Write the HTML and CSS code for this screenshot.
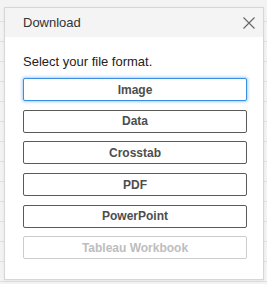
FILE: index.html
```html
<!DOCTYPE html>
<html lang="en">
<head>
    <meta charset="UTF-8">
    <meta name="viewport" content="width=device-width, initial-scale=1.0">
    <title>Download</title>
    <link rel="stylesheet" href="styles.css">
</head>
<body>
    <div class="dialog">
        <div class="dialog-header">
            <span class="dialog-title">Download</span>
            <button class="close-btn" aria-label="Close">
                <svg width="12" height="12" viewBox="0 0 12 12">
                    <path d="M0.5 0.5 L11.5 11.5 M11.5 0.5 L0.5 11.5" stroke="#666" stroke-width="1.1" fill="none"/>
                </svg>
            </button>
        </div>
        <div class="dialog-body">
            <p class="prompt">Select your file format.</p>
            <div class="format-list">
                <button class="btn btn-focus">Image</button>
                <button class="btn">Data</button>
                <button class="btn">Crosstab</button>
                <button class="btn">PDF</button>
                <button class="btn">PowerPoint</button>
                <button class="btn" disabled>Tableau Workbook</button>
            </div>
        </div>
    </div>
</body>
</html>
```

FILE: styles.css
```css
body {
    margin: 0;
    padding: 7px 3px 0 4px;
    height: 284px;
    box-sizing: border-box;
    overflow: hidden;
    font-family: "Liberation Sans", Arial, sans-serif;
    background-color: #f3f3f3;
    background-image: repeating-linear-gradient(to bottom, transparent 0, transparent 19px, #e0e0e0 19px, #e0e0e0 20px);
    background-position: 0 2px;
}
.dialog {
    width: 260px;
    height: 273px;
    box-sizing: border-box;
    background: white;
    border: 1px solid #d6d6d6;
    box-shadow: 0 1px 3px rgba(0,0,0,0.06);
}
.dialog-header {
    display: flex;
    align-items: center;
    justify-content: space-between;
    height: 29px;
    padding: 0 6px 0 18px;
    background: #f4f4f4;
}
.dialog-title {
    font-size: 13px;
    color: #333;
}
.close-btn {
    display: flex;
    align-items: center;
    justify-content: center;
    width: 16px;
    height: 16px;
    padding: 0;
    border: none;
    background: none;
    cursor: pointer;
}
.dialog-body {
    padding: 17px 16px 0 18px;
}
.prompt {
    margin: 0;
    font-size: 13px;
    line-height: 16px;
    color: #222;
}
.format-list {
    display: flex;
    flex-direction: column;
    gap: 8.7px;
    margin-top: 8px;
}
.btn {
    height: 23px;
    padding: 0;
    box-sizing: border-box;
    border: 1px solid #5a5a5a;
    border-radius: 2px;
    background: white;
    color: #4d4d4d;
    font-family: "Liberation Sans", Arial, sans-serif;
    font-size: 12px;
    font-weight: bold;
    cursor: pointer;
}
.btn-focus {
    border-color: #3b8fe2;
    box-shadow: 0 0 3px 1px rgba(59,143,226,0.45);
}
.btn:disabled {
    border-color: #cccccc;
    color: #bdbdbd;
    cursor: default;
}
```
